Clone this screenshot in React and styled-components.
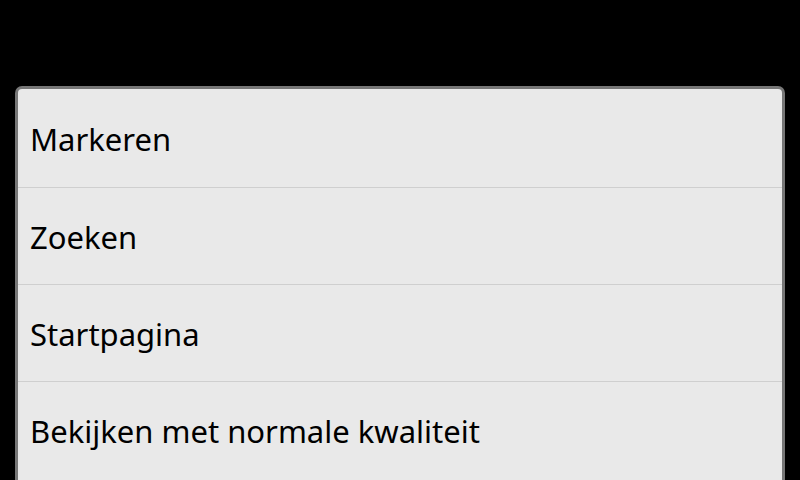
import React from 'react'
import styled, { createGlobalStyle } from 'styled-components'

const GlobalStyle = createGlobalStyle`
    html, body {
        margin: 0;
        padding: 0;
        background: #000;
    }
    body {
        width: 800px;
        height: 480px;
        overflow: hidden;
        font-family: 'Noto Sans', 'Open Sans', sans-serif;
    }
`

const Screen = styled.div`
    width: 800px;
    height: 480px;
    background: #000;
    padding: 86px 15px 0;
    box-sizing: border-box;
    overflow: hidden;
`

const Menu = styled.ul`
    list-style: none;
    margin: 0;
    padding: 0;
    background: #e9e9e9;
    border: 3px solid #777;
    border-bottom: none;
    border-radius: 7px 7px 0 0;
    height: 420px;
    box-sizing: border-box;
`

const Item = styled.li`
    height: 97px;
    box-sizing: border-box;
    display: flex;
    align-items: center;
    padding: 1px 0 0 12px;
    font-size: 31px;
    color: #000;
    border-bottom: ${({ $last }) => ($last ? 'none' : '1px solid #cfcfcf')};
    &:first-child {
        height: 99px;
    }
`

const items = ['Markeren', 'Zoeken', 'Startpagina', 'Bekijken met normale kwaliteit']

export default function App() {
    return (
        <>
            <GlobalStyle />
            <Screen>
                <Menu>
                    {items.map((label, i) => (
                        <Item key={label} $last={i === items.length - 1}>
                            {label}
                        </Item>
                    ))}
                </Menu>
            </Screen>
        </>
    )
}
